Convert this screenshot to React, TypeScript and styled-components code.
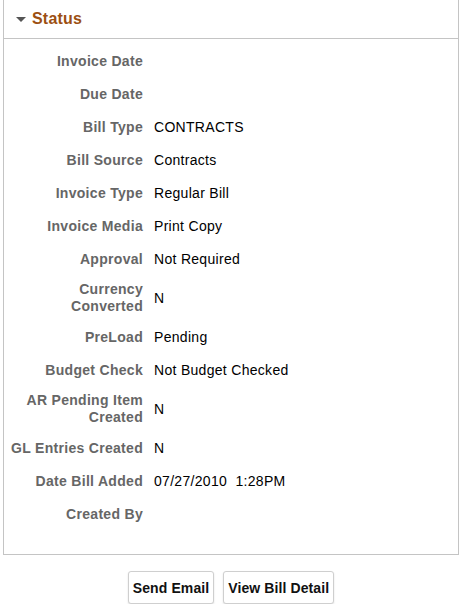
import styled, { createGlobalStyle } from "styled-components";

const GlobalStyle = createGlobalStyle`
  body {
    margin: 0;
    background: #ffffff;
    font-family: "Liberation Sans", Arial, sans-serif;
  }
`;

type Field = { label: string; value?: string };

const fields: Field[] = [
  { label: "Invoice Date" },
  { label: "Due Date" },
  { label: "Bill Type", value: "CONTRACTS" },
  { label: "Bill Source", value: "Contracts" },
  { label: "Invoice Type", value: "Regular Bill" },
  { label: "Invoice Media", value: "Print Copy" },
  { label: "Approval", value: "Not Required" },
  { label: "Currency Converted", value: "N" },
  { label: "PreLoad", value: "Pending" },
  { label: "Budget Check", value: "Not Budget Checked" },
  { label: "AR Pending Item Created", value: "N" },
  { label: "GL Entries Created", value: "N" },
  { label: "Date Bill Added", value: "07/27/2010\u00a0 1:28PM" },
  { label: "Created By" },
];

const App = () => {
  return (
    <Page>
      <GlobalStyle />
      <Section>
        <Header>
          <Caret />
          <Title>Status</Title>
        </Header>
        <FieldList>
          {fields.map((f) => (
            <Row key={f.label}>
              <Label>{f.label}</Label>
              <Value>{f.value}</Value>
            </Row>
          ))}
        </FieldList>
      </Section>
      <ButtonBar>
        <Button>Send Email</Button>
        <Button>View Bill Detail</Button>
      </ButtonBar>
    </Page>
  );
};

export default App;

const Page = styled.div`
  width: 461px;
  padding: 0 2px 0 3px;
  box-sizing: border-box;
`;

const Section = styled.div`
  border: 1px solid #c4c4c4;
  border-top: none;
`;

const Header = styled.div`
  display: flex;
  align-items: center;
  height: 39px;
  padding: 0 0 1px 12px;
  box-sizing: border-box;
  border-bottom: 1px solid #c4c4c4;
  gap: 6px;
`;

const Caret = styled.span`
  width: 0;
  height: 0;
  border-left: 5px solid transparent;
  border-right: 5px solid transparent;
  border-top: 5px solid #555555;
  margin-top: 1px;
`;

const Title = styled.span`
  font-size: 16px;
  font-weight: bold;
  color: #9c4f12;
  letter-spacing: 0.2px;
`;

const FieldList = styled.div`
  display: flex;
  flex-direction: column;
  gap: 11px;
  padding: 11px 0 29px 5px;
`;

const Row = styled.div`
  display: grid;
  grid-template-columns: 134px 1fr;
  column-gap: 11px;
  align-items: center;
  min-height: 22px;
`;

const Label = styled.div`
  text-align: right;
  font-size: 14px;
  font-weight: bold;
  line-height: 17px;
  letter-spacing: 0.3px;
  color: #666666;
`;

const Value = styled.div`
  font-size: 14px;
  line-height: 17px;
  letter-spacing: 0.3px;
  color: #000000;
  white-space: pre;
`;

const ButtonBar = styled.div`
  display: flex;
  justify-content: center;
  gap: 9px;
  padding-top: 16px;
`;

const Button = styled.button`
  font-family: "Liberation Sans", Arial, sans-serif;
  font-size: 14px;
  font-weight: bold;
  letter-spacing: 0.1px;
  color: #111111;
  background: #ffffff;
  border: 1px solid #cfcfcf;
  border-radius: 3px;
  box-shadow: 0 1px 2px rgba(0, 0, 0, 0.12);
  height: 33px;
  padding: 0 4px;
`;
